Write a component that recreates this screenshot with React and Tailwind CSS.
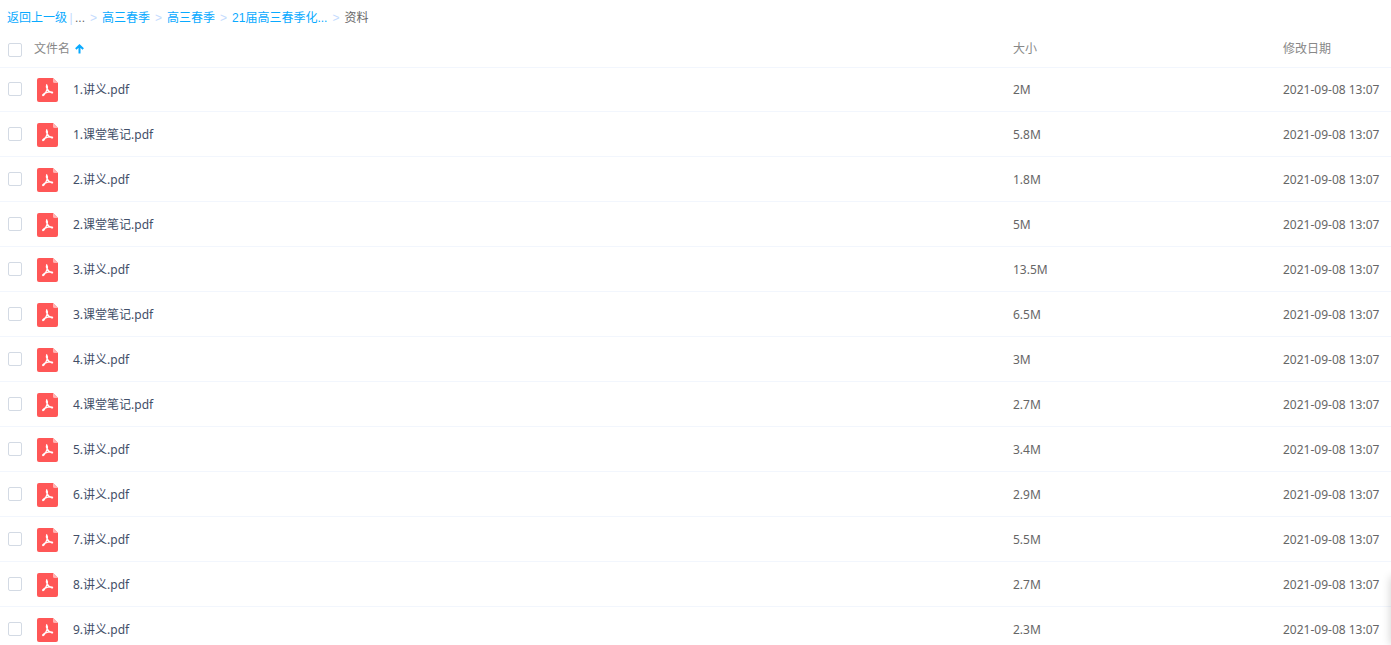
import React from "react";

const files = [
  { name: "1.讲义.pdf", size: "2M" },
  { name: "1.课堂笔记.pdf", size: "5.8M" },
  { name: "2.讲义.pdf", size: "1.8M" },
  { name: "2.课堂笔记.pdf", size: "5M" },
  { name: "3.讲义.pdf", size: "13.5M" },
  { name: "3.课堂笔记.pdf", size: "6.5M" },
  { name: "4.讲义.pdf", size: "3M" },
  { name: "4.课堂笔记.pdf", size: "2.7M" },
  { name: "5.讲义.pdf", size: "3.4M" },
  { name: "6.讲义.pdf", size: "2.9M" },
  { name: "7.讲义.pdf", size: "5.5M" },
  { name: "8.讲义.pdf", size: "2.7M" },
  { name: "9.讲义.pdf", size: "2.3M" },
];

const modified = "2021-09-08 13:07";

function PdfIcon() {
  return (
    <svg width="21" height="24" viewBox="0 0 21 24" aria-hidden="true" className="shrink-0">
      <path d="M2 0H16L21 5V22a2 2 0 0 1-2 2H2a2 2 0 0 1-2-2V2a2 2 0 0 1 2-2z" fill="#ff5757" />
      <path d="M16 0l5 5h-3.500A1.500 1.500 0 0 1 16 3.500z" fill="#ffb3b3" />
      <g fill="none" stroke="#fff" strokeWidth="1.300" strokeLinecap="round" strokeLinejoin="round">
        <path d="M9.700 6.800c1 1.300.9 2.700.3 4.600-.7 2.200-2 4.500-3.300 5.800-.7.6-1.400.2-.8-.6 1.100-1.300 3-2.100 5-2.500 1.600-.3 3.300-.4 4.300 0 .7.400.4 1-.4.8-1.700-.4-3.500-2-4.500-3.700-.8-1.400-1.200-3.200-.6-4.400z" />
      </g>
    </svg>
  );
}

function Checkbox({ label }) {
  return (
    <input
      type="checkbox"
      aria-label={label}
      className="block size-[14px] shrink-0 appearance-none rounded-[2px] border border-[#d3dae4] bg-white checked:border-[#09aaff] checked:bg-[#09aaff]"
    />
  );
}

function Separator() {
  return <span className="w-[17px] text-center text-[#c4dbfe]">&gt;</span>;
}

function Breadcrumb() {
  return (
    <nav
      aria-label="路径"
      className="flex h-9 items-center whitespace-nowrap pl-[7px] font-['Liberation_Sans','Noto_Sans_CJK_SC',sans-serif] text-[#09aaff]"
    >
      <a href="#up">返回上一级</a>
      <span className="w-2 text-center text-[#c4dbfe]">|</span>
      <span className="text-[#666]">...</span>
      <Separator />
      <a href="#grade">高三春季</a>
      <Separator />
      <a href="#term">高三春季</a>
      <Separator />
      <a href="#course">21届高三春季化...</a>
      <Separator />
      <span className="text-[#666]">资料</span>
    </nav>
  );
}

export default function App() {
  return (
    <div className="h-screen overflow-hidden bg-white font-['Noto_Sans','Noto_Sans_CJK_SC',sans-serif] text-[12px] leading-[18px] text-[#666]">
      <Breadcrumb />
      <table className="w-full table-fixed border-separate border-spacing-0 text-left">
        <colgroup>
          <col />
          <col className="w-[270px]" />
          <col className="w-[108px]" />
        </colgroup>
        <thead>
          <tr className="text-[#888]">
            <th className="h-[31px] p-0 pb-1 pl-2 font-normal">
              <div className="flex items-center">
                <Checkbox label="全选" />
                <button type="button" className="mb-0.5 ml-3 flex items-center gap-[5px]">
                  文件名
                  <svg width="9" height="10" viewBox="0 0 9 10" fill="none" stroke="#09aaff" strokeWidth="2" aria-hidden="true">
                    <path d="M4.500 9.500V1.500M.8 5L4.500 1.500 8.200 5" />
                  </svg>
                </button>
              </div>
            </th>
            <th className="p-0 pb-1.5 font-normal">大小</th>
            <th className="p-0 pb-1.5 font-normal">修改日期</th>
          </tr>
        </thead>
        <tbody className="[&>tr:first-child>td]:border-t [&>tr+tr>td]:pt-0.5">
          {files.map((file) => (
            <tr key={file.name}>
              <td className="h-[45px] border-[#f2f6fd] border-b p-0 pl-2">
                <div className="flex items-center">
                  <div className="mb-0.5">
                    <Checkbox label={file.name} />
                  </div>
                  <a href="#file" className="ml-[15px] flex items-center gap-[15px] text-[#424e67]">
                    <PdfIcon />
                    {file.name}
                  </a>
                </div>
              </td>
              <td className="border-[#f2f6fd] border-b p-0">{file.size}</td>
              <td className="whitespace-nowrap border-[#f2f6fd] border-b p-0">{modified}</td>
            </tr>
          ))}
        </tbody>
      </table>
      <div className="pointer-events-none fixed -right-2 bottom-0 h-[68px] w-2 shadow-[0_0_10px_rgba(0,0,0,0.2)]" />
    </div>
  );
}
